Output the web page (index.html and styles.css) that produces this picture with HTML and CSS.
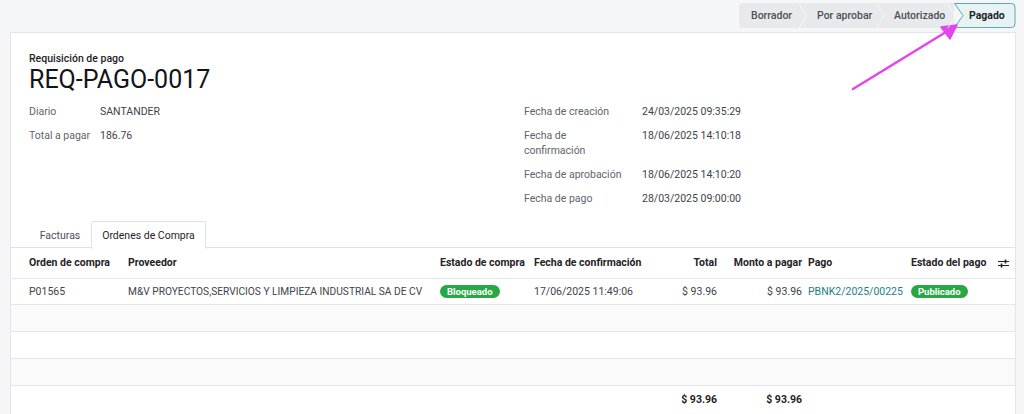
FILE: index.html
```html
<!DOCTYPE html>
<html lang="es">
<head>
<meta charset="utf-8">
<title>REQ-PAGO-0017</title>
<link rel="stylesheet" href="styles.css">
</head>
<body>
<div class="topbar">
  <div class="statusbar">
    <span class="st st-first">Borrador</span>
    <span class="st st-second">Por aprobar</span>
    <span class="st st-third">Autorizado</span>
    <span class="st st-active">
      <svg class="st-shape" width="62" height="25" viewBox="0 0 62 25"><path d="M0.5,0.5 H57.5 A3.5,3.5 0 0 1 61,4 V21 A3.5,3.5 0 0 1 57.5,24.5 H0.5 L9,12.5 Z" fill="#e6f2f3" stroke="#5ea8ad" stroke-width="1"/></svg>
      <span class="st-label">Pagado</span>
    </span>
  </div>
</div>

<div class="card">
  <div class="head">
    <div class="kind">Requisición de pago</div>
    <h1 class="title">REQ-PAGO-0017</h1>
  </div>

  <div class="groups">
    <div class="group group-left">
      <div class="lbl">Diario</div><div class="val">SANTANDER</div>
      <div class="lbl">Total a pagar</div><div class="val">186.76</div>
    </div>
    <div class="group group-right">
      <div class="lbl">Fecha de creación</div><div class="val">24/03/2025 09:35:29</div>
      <div class="lbl">Fecha de confirmación</div><div class="val">18/06/2025 14:10:18</div>
      <div class="lbl">Fecha de aprobación</div><div class="val">18/06/2025 14:10:20</div>
      <div class="lbl">Fecha de pago</div><div class="val">28/03/2025 09:00:00</div>
    </div>
  </div>

  <div class="tabs">
    <span class="tab tab-first">Facturas</span>
    <span class="tab tab-active">Ordenes de Compra</span>
  </div>

  <table class="grid">
    <colgroup>
      <col class="c1"><col class="c2"><col class="c3"><col class="c4"><col class="c5"><col class="c6"><col class="c7"><col class="c8"><col class="c9">
    </colgroup>
    <thead>
      <tr>
        <th class="first">Orden de compra</th>
        <th>Proveedor</th>
        <th>Estado de compra</th>
        <th>Fecha de confirmación</th>
        <th class="num">Total</th>
        <th class="num num6">Monto a pagar</th>
        <th>Pago</th>
        <th>Estado del pago</th>
        <th class="opt">
          <svg width="11" height="9" viewBox="0 0 11 9"><path d="M0,2.5 H11 M0,6.5 H11" stroke="#222" stroke-width="1.2"/><path d="M7.5,0.5 V4.5 M3.5,4.5 V8.5" stroke="#222" stroke-width="1.6"/></svg>
        </th>
      </tr>
    </thead>
    <tbody>
      <tr class="data">
        <td class="first">P01565</td>
        <td class="prov">M&amp;V PROYECTOS,SERVICIOS Y LIMPIEZA INDUSTRIAL SA DE CV</td>
        <td><span class="badge">Bloqueado</span></td>
        <td>17/06/2025 11:49:06</td>
        <td class="num">$ 93.96</td>
        <td class="num num6">$ 93.96</td>
        <td><span class="link">PBNK2/2025/00225</span></td>
        <td><span class="badge">Publicado</span></td>
        <td></td>
      </tr>
      <tr class="empty shade"><td colspan="9"></td></tr>
      <tr class="empty"><td colspan="9"></td></tr>
      <tr class="empty shade"><td colspan="9"></td></tr>
    </tbody>
    <tfoot>
      <tr>
        <td class="first"></td><td></td><td></td><td></td>
        <td class="num">$ 93.96</td>
        <td class="num num6">$ 93.96</td>
        <td></td><td></td><td></td>
      </tr>
    </tfoot>
  </table>
</div>

<svg class="annot" width="1024" height="414" viewBox="0 0 1024 414">
  <line x1="853" y1="89" x2="946" y2="32" stroke="#e446ee" stroke-width="2.6" stroke-linecap="round"/>
  <path d="M957,25 L941,27 L950,39 Z" fill="#e446ee" stroke="#e446ee" stroke-width="1.5" stroke-linejoin="round"/>
</svg>
</body>
</html>
```

FILE: styles.css
```css
* { box-sizing: border-box; }
html, body { margin: 0; padding: 0; }
body {
  background: #f5f6f7;
  font-family: Roboto, "Noto Sans", Arial, sans-serif;
  font-size: 10.5px;
  color: #374151;
  position: relative;
  width: 1024px;
  height: 414px;
  overflow: hidden;
}

/* status bar */
.topbar {
  display: flex;
  justify-content: flex-end;
  padding: 3px 8px 0 0;
  height: 32px;
}
.statusbar {
  display: flex;
  height: 25px;
  background: #e7e9ec;
  border-radius: 4px;
}
.st {
  position: relative;
  display: flex;
  align-items: center;
  color: #4b5056;
  font-weight: 500;
  font-size: 10.5px;
  white-space: nowrap;
}
.st-first { padding-left: 12px; width: 66px; }
.st-second { width: 78px; padding-left: 12px; }
.st-third { width: 71px; padding-left: 11px; }
.st:not(.st-active)::after {
  content: "";
  position: absolute;
  right: -3px;
  top: 4px;
  width: 17px;
  height: 17px;
  border-top: 1px solid #f7f8f9;
  border-right: 1px solid #f7f8f9;
  transform: scaleX(0.6) rotate(45deg);
  z-index: 1;
}
.st-active {
  width: 62px;
  padding: 0 0 0 15px;
  color: #1f2328;
  font-weight: 700;
  background: #f5f6f7;
}
.st-shape {
  position: absolute;
  left: 0;
  top: 0;
}
.st-label { position: relative; z-index: 2; }

/* card */
.card {
  margin: 0 8px 0 10px;
  background: #fff;
  border: 1px solid #e3e5e8;
  border-bottom: none;
  height: 383px;
}
.head { padding: 19px 18px 0; }
.kind {
  font-size: 10.5px;
  font-weight: 500;
  color: #1f2328;
  line-height: 13px;
}
.title {
  margin: 0;
  font-size: 25px;
  font-weight: 400;
  color: #111418;
  line-height: 30px;
}

.groups {
  display: grid;
  grid-template-columns: 495px 1fr;
  padding: 9px 18px 0;
}
.group {
  display: grid;
  align-content: start;
  row-gap: 9px;
}
.group-left { grid-template-columns: 71px 1fr; }
.group-right { grid-template-columns: 118px 1fr; }
.lbl {
  color: #5f646b;
  line-height: 15px;
  padding-right: 8px;
  white-space: nowrap;
}
.group-right .lbl { white-space: normal; width: 108px; }
.val {
  color: #3d434b;
  line-height: 15px;
}

/* tabs */
.tabs {
  display: flex;
  padding-left: 18px;
  margin-top: 15px;
  border-bottom: 1px solid #dfe2e6;
  height: 27px;
}
.tab {
  display: flex;
  align-items: center;
  justify-content: center;
  color: #4b5056;
  border: 1px solid transparent;
  border-bottom: none;
  height: 27px;
  white-space: nowrap;
}
.tab-first { width: 62px; }
.tab-active {
  width: 115px;
  color: #1f2328;
  border-color: #dfe2e6;
  background: #fff;
  height: 28px;
  border-radius: 2px 2px 0 0;
}

/* table */
.grid {
  width: 100%;
  border-collapse: collapse;
  table-layout: fixed;
}
.c1 { width: 113px; }
.c2 { width: 312px; }
.c3 { width: 94px; }
.c4 { width: 120px; }
.c5 { width: 71px; }
.c6 { width: 83px; }
.c7 { width: 103px; }
.c8 { width: 83px; }
.c9 { width: 25px; }
.grid th, .grid td {
  padding: 0 4px;
  text-align: left;
  white-space: nowrap;
  overflow: hidden;
}
.grid th {
  height: 30px;
  font-weight: 700;
  color: #1f2328;
  border-bottom: 1px solid #e5e7ea;
}
.grid td {
  height: 27px;
  color: #3d434b;
  border-bottom: 1px solid #e5e7ea;
}
.grid .first { padding-left: 18px; }
.grid .num { text-align: right; }
.grid .num6 { padding-right: 2px; }
.grid .prov { font-size: 10.2px; }
.grid .opt { text-align: left; padding: 0 0 0 8px; }
.grid .opt svg { display: inline-block; vertical-align: middle; }
.data td { height: 26px; }
.empty td { height: 27px; }
.shade td { background: #fafafb; }
.grid tfoot td {
  border-bottom: none;
  font-weight: 700;
  color: #1f2328;
  height: 28px;
}

.badge {
  display: inline-block;
  background: #28a745;
  color: #fff;
  font-size: 9.5px;
  font-weight: 700;
  line-height: 13px;
  padding: 0 7px;
  border-radius: 7px;
}
.link { color: #1b7f86; }

.annot {
  position: absolute;
  left: 0;
  top: 0;
  pointer-events: none;
}
```
